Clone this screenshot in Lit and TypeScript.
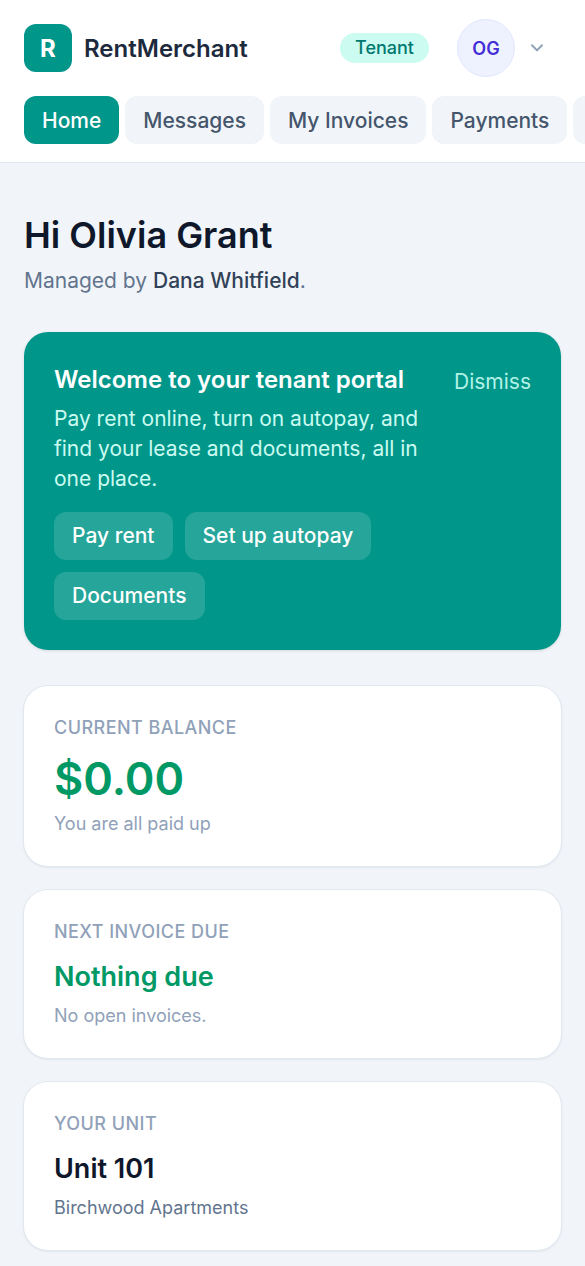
import { LitElement, html, css, nothing } from "lit";
import { customElement, property, state } from "lit/decorators.js";

@customElement("stat-card")
class StatCard extends LitElement {
  @property() label = "";
  @property() value = "";
  @property() note = "";
  @property() tone = "";
  @property() size = "";

  static styles = css`
    :host {
      display: block;
    }
    .card {
      padding: 30px;
      border-radius: 24px;
      background: #fff;
      box-shadow:
        0 0 0 1px #e2e8f0,
        0 1px 3px rgba(15, 23, 43, 0.12);
    }
    .label,
    .value,
    .note {
      margin: 0;
    }
    .label {
      font-size: 18px;
      font-weight: 500;
      line-height: 24px;
      letter-spacing: 0.025em;
      text-transform: uppercase;
      color: #90a1b9;
    }
    .value {
      margin-top: 12px;
      font-size: 27px;
      font-weight: 600;
      line-height: 42px;
      color: #0f172b;
    }
    .large {
      font-size: 45px;
      line-height: 54px;
    }
    .good {
      color: #009966;
    }
    .note {
      margin-top: 6px;
      font-size: 18px;
      line-height: 24px;
      color: #90a1b9;
    }
    .strong {
      color: #62748e;
    }
  `;

  render() {
    const good = this.tone === "good";
    return html`
      <section class="card">
        <h2 class="label">${this.label}</h2>
        <p class="value ${good ? "good" : ""} ${this.size === "large" ? "large" : ""}">${this.value}</p>
        <p class="note ${good ? "" : "strong"}">${this.note}</p>
      </section>
    `;
  }
}

@customElement("app-root")
class AppRoot extends LitElement {
  @state() welcomeOpen = true;

  static styles = css`
    :host {
      display: block;
      min-height: 100vh;
      background: #f1f5f9;
      color: #0f172b;
      font-family: Inter, "Liberation Sans", sans-serif;
    }
    * {
      box-sizing: border-box;
    }
    button {
      margin: 0;
      border: 0;
      background: none;
      font: inherit;
      cursor: pointer;
    }
    a {
      text-decoration: none;
      white-space: nowrap;
    }
    .header {
      display: flex;
      flex-direction: column;
      gap: 18px;
      padding: 18px 24px;
      border-bottom: 1px solid #e2e8f0;
      background: #fff;
    }
    .bar {
      display: flex;
      align-items: center;
      justify-content: space-between;
      height: 60px;
    }
    .brand,
    .account {
      display: flex;
      align-items: center;
    }
    .brand {
      gap: 12px;
      font-size: 24px;
      font-weight: 600;
      color: #1d293d;
    }
    .logo {
      display: grid;
      place-items: center;
      width: 48px;
      height: 48px;
      border-radius: 12px;
      background: #009689;
      color: #fff;
      font-weight: 700;
    }
    .account {
      gap: 28px;
    }
    .role {
      padding: 3px 15px;
      border-radius: 15px;
      background: #cbfbf1;
      color: #00786f;
      font-size: 18px;
      font-weight: 500;
      line-height: 24px;
    }
    .menu {
      display: flex;
      align-items: center;
      gap: 12px;
      padding: 0 14px 0 0;
    }
    .avatar {
      display: grid;
      place-items: center;
      width: 58px;
      height: 58px;
      border: 1px solid #e0e7ff;
      border-radius: 50%;
      background: #eef2ff;
      color: #432dd7;
      font-size: 18px;
      font-weight: 600;
    }
    .chevron {
      display: block;
      width: 20px;
      height: 20px;
    }
    .nav {
      display: flex;
      gap: 6px;
      margin-right: -24px;
      overflow: hidden;
    }
    .tab,
    .action {
      padding: 9px 18px;
      border-radius: 12px;
      font-size: 21px;
      font-weight: 500;
      line-height: 30px;
    }
    .tab {
      flex: none;
      padding: 10px 18px 8px;
      background: #f1f5f9;
      color: #45556c;
    }
    .current {
      background: #009689;
      color: #fff;
    }
    .main {
      display: flex;
      flex-direction: column;
      gap: 36px;
      padding: 48px 24px 16px;
    }
    .title,
    .managed,
    .heading,
    .copy {
      margin: 0;
    }
    .title {
      font-size: 36px;
      font-weight: 600;
      line-height: 48px;
    }
    .managed {
      margin-top: 7px;
      font-size: 21px;
      line-height: 30px;
      color: #62748e;
    }
    .manager {
      font-weight: 500;
      color: #314158;
    }
    .welcome {
      display: flex;
      align-items: flex-start;
      justify-content: space-between;
      gap: 24px;
      padding: 30px;
      border-radius: 24px;
      background: #009689;
      color: #fff;
      box-shadow: 0 1px 3px rgba(15, 23, 43, 0.12);
    }
    .heading {
      font-size: 24px;
      font-weight: 600;
      line-height: 36px;
    }
    .copy {
      margin-top: 6px;
      font-size: 21px;
      line-height: 30px;
      color: #cbfbf1;
    }
    .actions {
      display: flex;
      flex-wrap: wrap;
      gap: 12px;
      margin-top: 18px;
    }
    .action {
      background: rgba(255, 255, 255, 0.15);
      color: #fff;
    }
    .dismiss {
      flex: none;
      padding: 5px 0;
      font-size: 21px;
      line-height: 30px;
      color: #b2f2e7;
    }
    .stats {
      display: grid;
      gap: 24px;
    }
  `;

  render() {
    const tabs = ["Home", "Messages", "My Invoices", "Payments", "Documents"];
    const actions = ["Pay rent", "Set up autopay", "Documents"];
    return html`
      <header class="header">
        <div class="bar">
          <div class="brand"><span class="logo">R</span><span>RentMerchant</span></div>
          <div class="account">
            <span class="role">Tenant</span>
            <button class="menu" type="button" aria-label="Account menu">
              <span class="avatar">OG</span>
              <svg class="chevron" viewBox="0 0 20 20" fill="none" stroke="#90a1b9" stroke-width="2" stroke-linecap="round" stroke-linejoin="round">
                <path d="M5 7.2 10 12.4 15 7.2" />
              </svg>
            </button>
          </div>
        </div>
        <nav class="nav" aria-label="Main">
          ${tabs.map((tab, i) => html`<a class="tab ${i === 0 ? "current" : ""}" href="#" aria-current=${i === 0 ? "page" : nothing}>${tab}</a>`)}
        </nav>
      </header>
      <main class="main">
        <div>
          <h1 class="title">Hi Olivia Grant</h1>
          <p class="managed">Managed by <span class="manager">Dana Whitfield</span>.</p>
        </div>
        ${this.welcomeOpen
          ? html`<section class="welcome">
              <div>
                <h2 class="heading">Welcome to your tenant portal</h2>
                <p class="copy">Pay rent online, turn on autopay, and find your lease and documents, all in one place.</p>
                <div class="actions">
                  ${actions.map((action) => html`<a class="action" href="#">${action}</a>`)}
                </div>
              </div>
              <button class="dismiss" type="button" @click=${() => (this.welcomeOpen = false)}>Dismiss</button>
            </section>`
          : nothing}
        <div class="stats">
          <stat-card label="Current balance" value="$0.00" note="You are all paid up" tone="good" size="large"></stat-card>
          <stat-card label="Next invoice due" value="Nothing due" note="No open invoices." tone="good"></stat-card>
          <stat-card label="Your unit" value="Unit 101" note="Birchwood Apartments"></stat-card>
        </div>
      </main>
    `;
  }
}
